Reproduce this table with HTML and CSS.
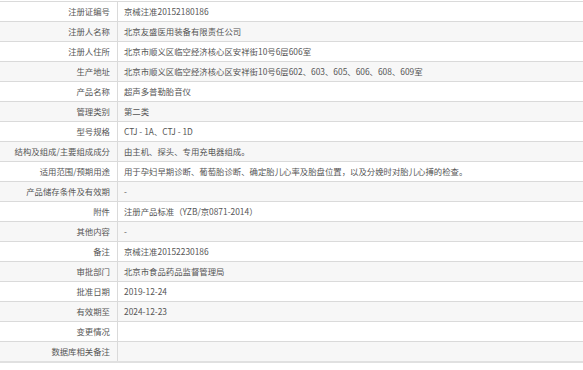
FILE: index.html
```html
<!DOCTYPE html>
<html lang="zh-CN">
<head>
<meta charset="utf-8">
<link rel="stylesheet" href="styles.css">
</head>
<body>
<table class="info">
<tbody>
<tr><th>注册证编号</th><td>京械注准20152180186</td></tr>
<tr><th>注册人名称</th><td>北京友盛医用装备有限责任公司</td></tr>
<tr><th>注册人住所</th><td>北京市顺义区临空经济核心区安祥街10号6层606室</td></tr>
<tr><th>生产地址</th><td>北京市顺义区临空经济核心区安祥街10号6层602、603、605、606、608、609室</td></tr>
<tr><th>产品名称</th><td>超声多普勒胎音仪</td></tr>
<tr><th>管理类别</th><td>第二类</td></tr>
<tr><th>型号规格</th><td>CTJ - 1A、CTJ - 1D</td></tr>
<tr><th>结构及组成/主要组成成分</th><td>由主机、探头、专用充电器组成。</td></tr>
<tr><th>适用范围/预期用途</th><td>用于孕妇早期诊断、葡萄胎诊断、确定胎儿心率及胎盘位置，以及分娩时对胎儿心搏的检查。</td></tr>
<tr><th>产品储存条件及有效期</th><td>-</td></tr>
<tr><th>附件</th><td>注册产品标准（YZB/京0871-2014）</td></tr>
<tr><th>其他内容</th><td>-</td></tr>
<tr><th>备注</th><td>京械注准20152230186</td></tr>
<tr><th>审批部门</th><td>北京市食品药品监督管理局</td></tr>
<tr><th>批准日期</th><td>2019-12-24</td></tr>
<tr><th>有效期至</th><td>2024-12-23</td></tr>
<tr><th>变更情况</th><td></td></tr>
<tr><th>数据库相关备注</th><td></td></tr>
</tbody>
</table>
</body>
</html>
```
FILE: styles.css
```css
html, body {
  margin: 0;
  padding: 0;
  background: #fff;
}
body {
  padding-top: 1px;
  font-family: "Noto Sans CJK SC", "Noto Sans", sans-serif;
  font-size: 8.4px;
  color: #555;
}
.info {
  width: 100%;
  border-collapse: collapse;
  border-top: 1px solid #dadada;
  border-bottom: 2px solid #e0e0e0;
}
.info tr {
  height: 20px;
  border-bottom: 1px solid #dadada;
}
.info tr:nth-child(even) {
  background: #f7f7f7;
}
.info th,
.info td {
  padding: 0;
  line-height: 19px;
  white-space: nowrap;
  font-weight: normal;
  vertical-align: middle;
}
.info th {
  width: 110px;
  text-align: right;
  padding-right: 7px;
  border-right: 1px solid #dadada;
  color: #555;
}
.info td {
  text-align: left;
  padding-left: 6px;
  color: #555;
}
```
